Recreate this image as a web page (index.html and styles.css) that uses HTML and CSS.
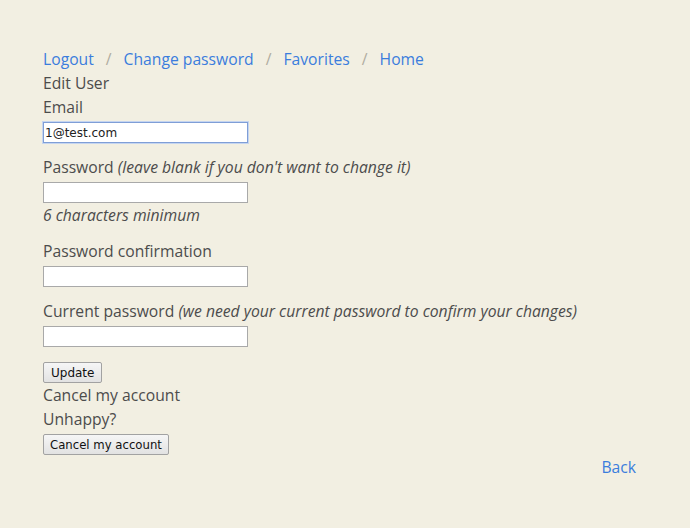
FILE: index.html
```html
<!DOCTYPE html>
<html>
<head>
<meta charset="utf-8">
<link rel="stylesheet" href="styles.css">
</head>
<body>
<div class="page">
  <nav class="crumbs">
    <a href="#">Logout</a><span class="sep">/</span><a href="#">Change password</a><span class="sep">/</span><a href="#">Favorites</a><span class="sep">/</span><a href="#">Home</a>
  </nav>
  <h2 class="title">Edit User</h2>
  <form class="form">
    <div class="field">
      <label class="label">Email</label>
      <input class="input focus" type="email" value="1@test.com">
    </div>
    <div class="field">
      <label class="label">Password <i>(leave blank if you don't want to change it)</i></label>
      <input class="input" type="password">
      <div class="hint"><i>6 characters minimum</i></div>
    </div>
    <div class="field">
      <label class="label">Password confirmation</label>
      <input class="input" type="password">
    </div>
    <div class="field">
      <label class="label">Current password <i>(we need your current password to confirm your changes)</i></label>
      <input class="input" type="password">
    </div>
    <div class="actions">
      <button class="btn" type="button">Update</button>
    </div>
  </form>
  <h3 class="title">Cancel my account</h3>
  <p class="text">Unhappy?</p>
  <button class="btn cancel" type="button">Cancel my account</button>
  <div class="back-row"><a href="#">Back</a></div>
</div>
</body>
</html>
```
FILE: styles.css
```css
html, body {
  margin: 0;
  padding: 0;
  background: #f2efe2;
}
body {
  font-family: "Open Sans", "Noto Sans", sans-serif;
  font-size: 15.7px;
  line-height: 24px;
  color: #4c4c4c;
}
.page {
  width: 593px;
  padding: 47px 0 0 43px;
}
a {
  color: #3b7ddd;
  text-decoration: none;
}
.crumbs .sep {
  color: #b0aca0;
  padding: 0 12px;
}
.title {
  margin: 0;
  font-size: 15.7px;
  font-weight: normal;
  line-height: 24px;
}
.form { margin: 0; }
.field {
  display: flex;
  flex-direction: column;
  align-items: flex-start;
  margin-bottom: 12px;
}
.label { display: block; }
.input {
  box-sizing: border-box;
  width: 205px;
  height: 21px;
  margin: 3px 0 0 0;
  padding: 1px 1px;
  border: 1px solid #a9a9a9;
  background: #fff;
  font-family: "DejaVu Sans", sans-serif;
  font-size: 12px;
  color: #222;
  outline: none;
}
.input.focus {
  border-color: #7f9ed6;
  box-shadow: 0 0 0 1px #c5d5f0;
}
.hint { line-height: 24px; }
.actions { padding-top: 3px; }
.btn {
  box-sizing: border-box;
  height: 21px;
  padding: 0 7px;
  border: 1px solid #a2a2a2;
  border-radius: 2px;
  background: linear-gradient(#f6f6f6, #e2e2e2);
  font-family: "DejaVu Sans", sans-serif;
  font-size: 12px;
  color: #111;
  display: block;
}
.btn.cancel {
  margin-top: 3px;
  padding: 0 6px;
  font-size: 11.7px;
}
.text { margin: 0; }
.back-row {
  text-align: right;
}
```
